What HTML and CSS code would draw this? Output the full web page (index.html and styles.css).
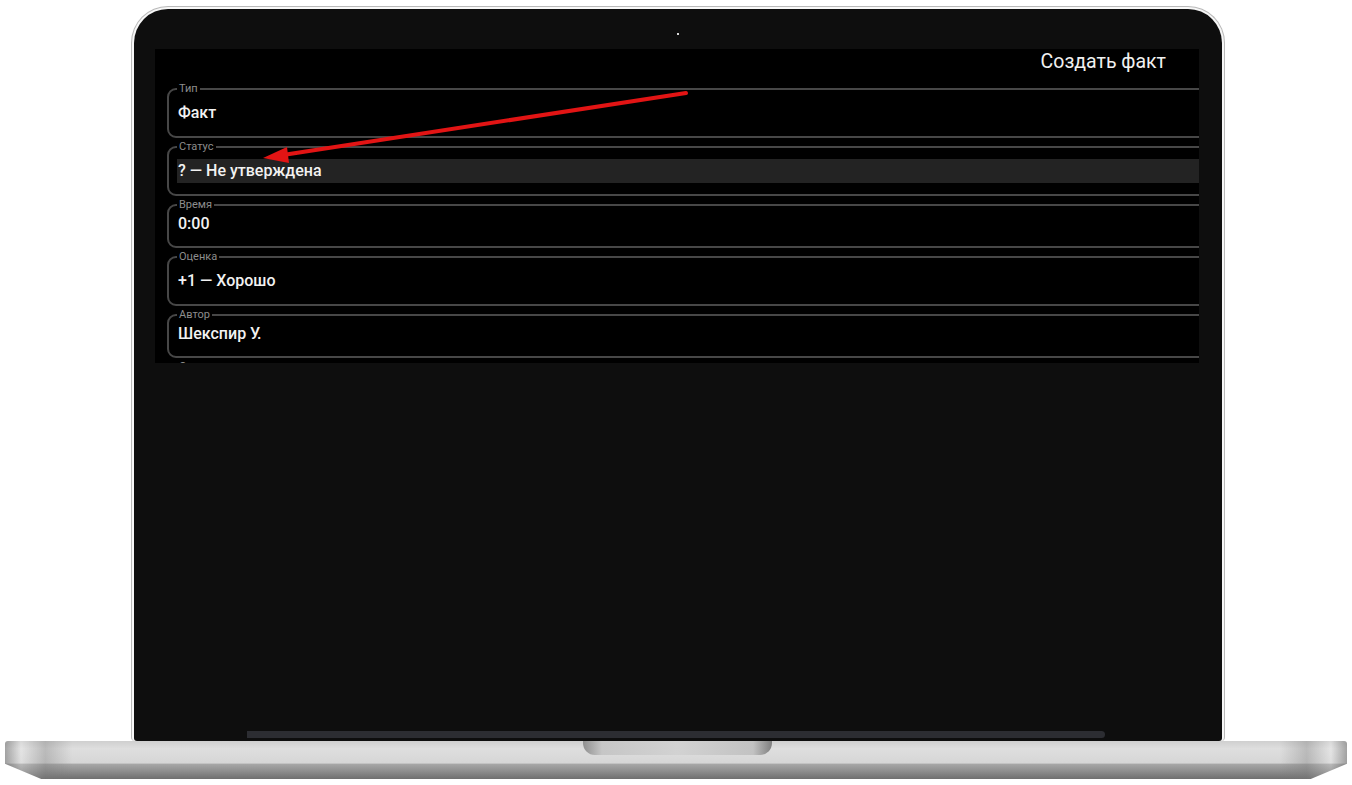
FILE: index.html
```html
<!DOCTYPE html>
<html lang="ru">
<head>
<meta charset="utf-8">
<title>Создать факт</title>
<link rel="stylesheet" href="styles.css">
</head>
<body>
<div class="laptop">
  <div class="lid">
    <div class="bezel">
      <div class="camera"></div>
      <div class="screen">
        <div class="app-header">Создать факт</div>
        <div class="form">
          <fieldset class="field">
            <legend>Тип</legend>
            <div class="value">Факт</div>
          </fieldset>
          <fieldset class="field">
            <legend>Статус</legend>
            <div class="value selected">? — Не утверждена</div>
          </fieldset>
          <fieldset class="field compact">
            <legend>Время</legend>
            <div class="value">0:00</div>
          </fieldset>
          <fieldset class="field">
            <legend>Оценка</legend>
            <div class="value">+1 — Хорошо</div>
          </fieldset>
          <fieldset class="field compact">
            <legend>Автор</legend>
            <div class="value">Шекспир У.</div>
          </fieldset>
          <fieldset class="field compact">
            <legend>Описание</legend>
            <div class="value">&nbsp;</div>
          </fieldset>
        </div>
        <svg class="arrow" width="1044" height="314" viewBox="0 0 1044 314">
          <line x1="531" y1="44" x2="128" y2="106" stroke="#e21414" stroke-width="4" stroke-linecap="round"/>
          <polygon points="108,109 132,98 134,114" fill="#e21414"/>
        </svg>
      </div>
      <div class="hinge"></div>
    </div>
  </div>
  <div class="base">
    <div class="notch"></div>
  </div>
</div>
</body>
</html>
```
FILE: styles.css
```css
* { box-sizing: border-box; }

html, body {
  margin: 0;
  padding: 0;
  background: #ffffff;
  font-family: Roboto, "Noto Sans", Arial, sans-serif;
}

.laptop {
  width: 1352px;
  height: 785px;
  padding-top: 6px;
  display: flex;
  flex-direction: column;
}

.lid {
  margin-left: 131px;
  width: 1094px;
  height: 735px;
  border: 1px solid #b9b9b9;
  border-bottom: none;
  border-radius: 37px 37px 4px 4px;
  padding: 2px 2px 0 2px;
  background: #f7f7f7;
}

.bezel {
  height: 100%;
  background: #0e0e0e;
  border-radius: 34px 34px 3px 3px;
  padding: 24px 0 0 21px;
  display: flex;
  flex-direction: column;
}

.camera {
  align-self: center;
  width: 2px;
  height: 2px;
  margin-left: -21px;
  background: #d8d8d8;
  margin-bottom: 14px;
}

.screen {
  position: relative;
  width: 1044px;
  height: 314px;
  background: #000;
  overflow: hidden;
}

.app-header {
  height: 26px;
  line-height: 26px;
  text-align: right;
  padding-right: 33px;
  color: #f1f1f1;
  font-size: 19.5px;
  margin-bottom: 8px;
}

.form {
  display: flex;
  flex-direction: column;
  gap: 3px;
  margin-left: 12px;
  margin-right: -40px;
}

.field {
  margin: 0;
  min-inline-size: 0;
  border: 2px solid #474747;
  border-radius: 9px;
  padding: 6px 0 11px 8px;
}

.field.compact {
  padding-top: 1px;
  padding-bottom: 10px;
}

.field legend {
  padding: 0 2px;
  font-size: 11px;
  line-height: 12px;
  color: #8d8d8d;
}

.value {
  height: 24px;
  line-height: 24px;
  padding-left: 1px;
  font-size: 16px;
  font-weight: 500;
  color: #f2f2f2;
  white-space: nowrap;
}

.value.selected {
  background: #232323;
}

.arrow {
  position: absolute;
  left: 0;
  top: 0;
  pointer-events: none;
}

.hinge {
  margin-top: auto;
  margin-left: 92px;
  width: 858px;
  height: 7px;
  margin-bottom: 3px;
  background: #2c2d32;
  border-radius: 0 4px 4px 0;
}

.base {
  position: relative;
  margin-left: 5px;
  width: 1342px;
  height: 38px;
  clip-path: polygon(0 0, 100% 0, 100% 60%, 97.3% 100%, 2.7% 100%, 0 60%);
  background:
    linear-gradient(to right, rgba(90,90,90,0.45) 0%, rgba(255,255,255,0.2) 1.2%, rgba(120,120,120,0.35) 3%, rgba(0,0,0,0) 5%, rgba(0,0,0,0) 95%, rgba(120,120,120,0.35) 97%, rgba(255,255,255,0.2) 98.8%, rgba(90,90,90,0.45) 100%),
    linear-gradient(to bottom, #cfcfcf 0%, #dedede 20%, #d6d6d6 58%, #a7a7a7 61%, #8d8d8d 80%, #6f6f6f 100%);
  border-radius: 3px 3px 0 0;
  display: flex;
  justify-content: center;
}

.notch {
  margin-left: 3px;
  width: 189px;
  height: 14px;
  border-radius: 0 0 12px 12px;
  background: linear-gradient(to right, #8f8f8f 0%, #c6c6c6 10%, #d2d2d2 50%, #c2c2c2 90%, #7f7f7f 100%);
}
```
